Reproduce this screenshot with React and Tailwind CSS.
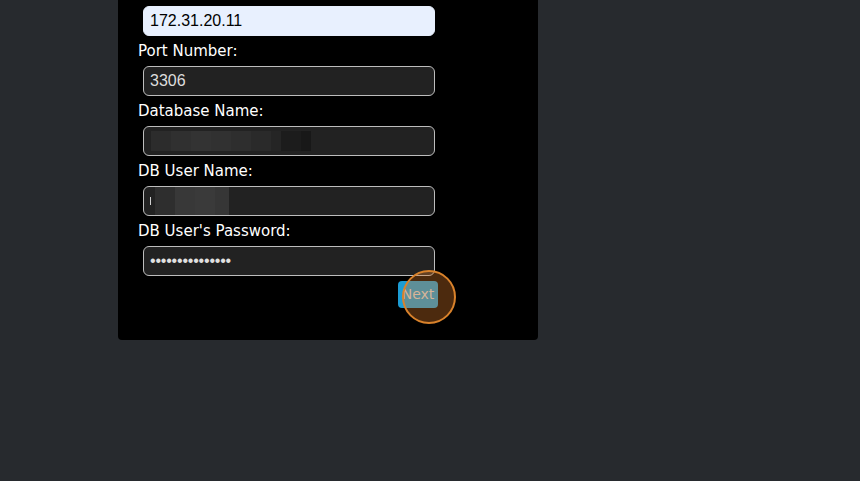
export default function App() {
  const label = "block text-white text-[15px] leading-[20px] font-['DejaVu_Sans',sans-serif]";
  const input =
    "ml-[5px] w-[292px] h-[30px] rounded-[6px] border border-[#bdbdbd] bg-[#222222] flex items-center px-[6px] text-[16px] font-['Liberation_Sans',Arial,sans-serif]";
  return (
    <div className="w-[860px] h-[481px] bg-[#272a2e] overflow-hidden">
      <div className="ml-[118px] w-[420px] bg-black rounded-b-[4px] pl-[20px] pt-[6px] pb-[32px] flex flex-col">
        <div className="ml-[5px] w-[292px] h-[30px] rounded-[6px] border border-[#e8f0fe] bg-[#e8f0fe] flex items-center px-[6px] text-[16px] text-black font-['Liberation_Sans',Arial,sans-serif]">
          172.31.20.11
        </div>

        <span className={label + " mt-[5px]"}>Port Number:</span>
        <div className={input + " mt-[5px] text-[#dddddd]"}>3306</div>

        <span className={label + " mt-[5px]"}>Database Name:</span>
        <div className={input + " mt-[5px]"}>
          <div className="flex h-[20px] ml-[1px]">
            <div className="w-[20px] bg-[#2c2c2c]" />
            <div className="w-[20px] bg-[#303030]" />
            <div className="w-[20px] bg-[#333333]" />
            <div className="w-[20px] bg-[#313131]" />
            <div className="w-[20px] bg-[#2e2e2e]" />
            <div className="w-[20px] bg-[#2a2a2a]" />
            <div className="w-[10px] bg-[#252525]" />
            <div className="w-[20px] bg-[#1c1c1c]" />
            <div className="w-[10px] bg-[#181818]" />
          </div>
        </div>

        <span className={label + " mt-[5px]"}>DB User Name:</span>
        <div className={input + " mt-[5px] px-[4px]"}>
          <div className="flex h-[28px] items-center">
            <div className="w-[1px] h-[8px] bg-[#d0d0d0] mr-[4px]" />
            <div className="w-[20px] h-[28px] bg-[#2e2e2e]" />
            <div className="w-[20px] h-[28px] bg-[#383838]" />
            <div className="w-[20px] h-[28px] bg-[#3a3a3a]" />
            <div className="w-[14px] h-[28px] bg-[#363636]" />
          </div>
        </div>

        <span className={label + " mt-[5px]"}>DB User's Password:</span>
        <div className={input + " mt-[5px] text-[#e0e0e0] text-[10px] tracking-[-0.2px]"}>
          •••••••••••••••
        </div>

        <div className="relative mt-[5px] ml-[260px] w-[40px] h-[27px]">
          <div className="w-[40px] h-[27px] rounded-[4px] bg-[#1c9cd4] flex items-center justify-center text-[14px] text-[#d4d4d4] font-['DejaVu_Sans',sans-serif]">
            Next
          </div>
          <div className="absolute left-[4px] top-[-11px] w-[54px] h-[54px] rounded-full border-2 border-[#d9822b] bg-[rgba(217,120,40,0.35)]" />
        </div>
      </div>
    </div>
  );
}
